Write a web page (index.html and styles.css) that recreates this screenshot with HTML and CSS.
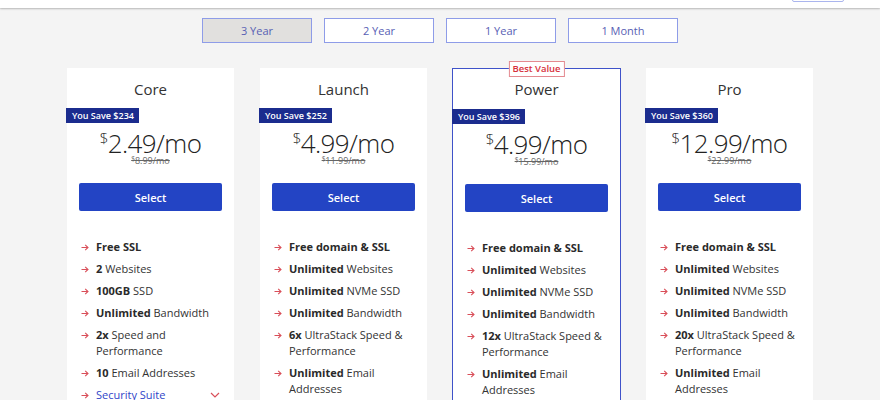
FILE: index.html
```html
<!DOCTYPE html>
<html lang="en">
<head>
<meta charset="utf-8">
<title>Pricing</title>
<link rel="stylesheet" href="styles.css">
</head>
<body>
<header class="topbar">
  <span class="top-btn"></span>
</header>

<nav class="terms">
  <button class="term active">3 Year</button>
  <button class="term">2 Year</button>
  <button class="term">1 Year</button>
  <button class="term">1 Month</button>
</nav>

<main class="plans">
  <section class="card">
    <h2 class="name">Core</h2>
    <div class="save">You Save $234</div>
    <div class="price"><sup>$</sup>2.49/mo</div>
    <div class="old"><sup>$</sup>8.99/mo</div>
    <button class="select">Select</button>
    <ul class="feats">
      <li><b>Free SSL</b></li>
      <li><b>2</b> Websites</li>
      <li><b>100GB</b> SSD</li>
      <li><b>Unlimited</b> Bandwidth</li>
      <li><b>2x</b> Speed and Performance</li>
      <li><b>10</b> Email Addresses</li>
      <li class="link">Security Suite<svg class="chev" viewBox="0 0 10 6" width="10" height="6"><polyline points="1,1 5,5 9,1" fill="none" stroke="#d9505a" stroke-width="1.2"/></svg></li>
    </ul>
  </section>

  <section class="card">
    <h2 class="name">Launch</h2>
    <div class="save">You Save $252</div>
    <div class="price"><sup>$</sup>4.99/mo</div>
    <div class="old"><sup>$</sup>11.99/mo</div>
    <button class="select">Select</button>
    <ul class="feats">
      <li><b>Free domain &amp; SSL</b></li>
      <li><b>Unlimited</b> Websites</li>
      <li><b>Unlimited</b> NVMe SSD</li>
      <li><b>Unlimited</b> Bandwidth</li>
      <li><b>6x</b> UltraStack Speed &amp; Performance</li>
      <li><b>Unlimited</b> Email Addresses</li>
    </ul>
  </section>

  <section class="card best">
    <span class="tag">Best Value</span>
    <h2 class="name">Power</h2>
    <div class="save">You Save $396</div>
    <div class="price"><sup>$</sup>4.99/mo</div>
    <div class="old"><sup>$</sup>15.99/mo</div>
    <button class="select">Select</button>
    <ul class="feats">
      <li><b>Free domain &amp; SSL</b></li>
      <li><b>Unlimited</b> Websites</li>
      <li><b>Unlimited</b> NVMe SSD</li>
      <li><b>Unlimited</b> Bandwidth</li>
      <li><b>12x</b> UltraStack Speed &amp; Performance</li>
      <li><b>Unlimited</b> Email Addresses</li>
    </ul>
  </section>

  <section class="card">
    <h2 class="name">Pro</h2>
    <div class="save">You Save $360</div>
    <div class="price"><sup>$</sup>12.99/mo</div>
    <div class="old"><sup>$</sup>22.99/mo</div>
    <button class="select">Select</button>
    <ul class="feats">
      <li><b>Free domain &amp; SSL</b></li>
      <li><b>Unlimited</b> Websites</li>
      <li><b>Unlimited</b> NVMe SSD</li>
      <li><b>Unlimited</b> Bandwidth</li>
      <li><b>20x</b> UltraStack Speed &amp; Performance</li>
      <li><b>Unlimited</b> Email Addresses</li>
    </ul>
  </section>
</main>
</body>
</html>
```

FILE: styles.css
```css
* { box-sizing: border-box; }
html, body { margin: 0; padding: 0; }
body {
  background: #f4f4f4;
  font-family: "Open Sans", "Liberation Sans", sans-serif;
  color: #333;
  height: 400px;
  overflow: hidden;
}
.topbar {
  height: 8px;
  background: #fff;
  box-shadow: 0 1px 2px rgba(0,0,0,0.25);
  display: flex;
  justify-content: flex-end;
  align-items: flex-end;
  padding-right: 36px;
  position: relative;
  z-index: 2;
}
.top-btn {
  width: 52px;
  height: 20px;
  border: 1px solid #aab5ee;
  border-radius: 2px;
  margin-bottom: 6px;
}
.terms {
  display: flex;
  justify-content: center;
  gap: 12px;
  margin-top: 10px;
}
.term {
  width: 110px;
  height: 25px;
  background: #fff;
  border: 1px solid #8e9ce8;
  color: #5860b4;
  font-family: "Open Sans", sans-serif;
  font-size: 11px;
  padding: 0;
}
.term.active { background: #e1e0de; }
.plans {
  display: flex;
  justify-content: center;
  gap: 26px;
  margin-top: 25px;
}
.card {
  width: 167px;
  height: 360px;
  background: #fff;
  position: relative;
  display: flex;
  flex-direction: column;
  align-items: center;
  padding-top: 11px;
}
.card.best {
  border: 1px solid #3f52c9;
  width: 169px;
  margin: 0 -1px;
  padding-top: 10px;
}
.tag {
  position: absolute;
  top: -8px;
  left: 50%;
  transform: translateX(-50%);
  background: #fff;
  border: 1px solid #e48a90;
  color: #d6303b;
  font-size: 9.5px;
  font-weight: 600;
  padding: 0 3px;
  line-height: 14px;
  white-space: nowrap;
}
.name {
  margin: 0;
  font-size: 15px;
  font-weight: 400;
  line-height: 20px;
  color: #333;
}
.save {
  align-self: flex-start;
  margin-left: -1px;
  margin-top: 9px;
  background: #1b2c8e;
  color: #fff;
  font-size: 9px;
  font-weight: 600;
  height: 15px;
  line-height: 15px;
  padding: 0 5px 0 6px;
  white-space: nowrap;
}
.best .save { margin-top: 10px; }
.price {
  margin-top: 5px;
  font-size: 26px;
  font-weight: 300;
  line-height: 30px;
  letter-spacing: -0.6px;
  color: #222;
}
.price sup {
  font-size: 15px;
  vertical-align: 9px;
  line-height: 0;
  margin-right: 0;
}
.old {
  font-size: 9px;
  color: #666;
  text-decoration: line-through;
  line-height: 10px;
  margin-top: -2px;
}
.old sup { font-size: 6.5px; vertical-align: 3px; line-height: 0; }
.select {
  margin-top: 17px;
  width: 143px;
  height: 28px;
  background: #2344c4;
  border: 0;
  border-radius: 2px;
  color: #fff;
  font-family: "Open Sans", sans-serif;
  font-size: 11px;
  font-weight: 600;
  padding: 0;
}
.feats {
  list-style: none;
  margin: 28px 0 0;
  padding: 0 12px 0 14px;
  align-self: stretch;
  font-size: 11px;
  line-height: 16px;
}
.feats li {
  position: relative;
  padding-left: 15px;
  margin-bottom: 6px;
}
.feats li::before {
  content: "";
  position: absolute;
  left: 0;
  top: 5px;
  width: 8px;
  height: 7px;
  background: url("data:image/svg+xml;utf8,<svg xmlns='http://www.w3.org/2000/svg' viewBox='0 0 8 7'><path d='M0.5 3.5H7M4.2 0.8L7 3.5L4.2 6.2' fill='none' stroke='%23d94f59' stroke-width='1.1'/></svg>") no-repeat;
}
.feats b { font-weight: 700; color: #2a2a2a; }
.feats .link { color: #2f45c8; display: flex; justify-content: space-between; align-items: center; }
.chev { margin-right: 2px; }
```
